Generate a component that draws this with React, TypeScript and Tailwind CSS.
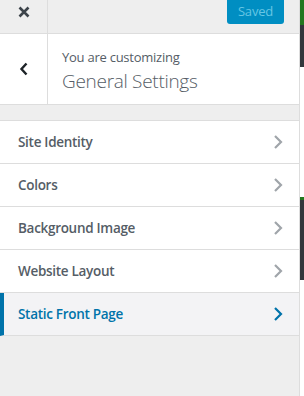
import React from 'react'

const items = ['Site Identity', 'Colors', 'Background Image', 'Website Layout', 'Static Front Page']

function Chevron({ className }: { className: string }) {
  return (
    <svg width="10" height="16" viewBox="0 0 10 16" className={className}>
      <path d="M2 2 L8 8 L2 14" fill="none" stroke="currentColor" strokeWidth="2.2" />
    </svg>
  )
}

export default function App() {
  return (
    <div
      className="flex h-[396px] w-[304px] overflow-hidden bg-white"
      style={{ fontFamily: '"Open Sans", "Noto Sans", sans-serif' }}
    >
      <div className="flex w-[300px] flex-col border-r border-[#dddddd] bg-[#eeeeee]">
        {/* Header */}
        <div className="flex h-[34px] border-b border-[#dddddd]">
          <button className="flex h-[33px] w-[48px] items-center justify-center border-r border-[#dddddd] pb-[9px]">
            <svg width="12" height="12" viewBox="0 0 12 12">
              <path d="M1.5 1.5 L10.5 10.5 M10.5 1.5 L1.5 10.5" stroke="#3c434a" strokeWidth="2.6" />
            </svg>
          </button>
          <div className="flex flex-1 justify-end pr-[15px]">
            <div className="flex h-[24px] w-[57px] items-center justify-center rounded-b-[3px] bg-[#008ec2] text-[13px] tracking-[-0.2px] text-[#66c6e4]">
              Saved
            </div>
          </div>
        </div>

        {/* Section title */}
        <div className="flex h-[71px] border-b border-[#dddddd] bg-white">
          <button className="flex w-[48px] items-center justify-center border-r border-[#dddddd]">
            <svg width="10" height="14" viewBox="0 0 10 14">
              <path d="M7.5 1.5 L2.5 7 L7.5 12.5" fill="none" stroke="#1d2327" strokeWidth="2.4" />
            </svg>
          </button>
          <div className="flex flex-col pl-[14px] pt-[13px] text-[#555d66]">
            <span className="text-[13px] leading-[20px] tracking-[-0.25px]">You are customizing</span>
            <span className="text-[19px] font-light leading-[28px] tracking-[-0.3px]">General Settings</span>
          </div>
        </div>

        {/* Sections */}
        <div className="mt-[15px] border-t border-[#dddddd]">
          {items.map((item, i) => {
            const active = i === items.length - 1
            return (
              <div
                key={item}
                className={
                  active
                    ? 'flex h-[43px] items-center justify-between border-b border-l-4 border-[#dddddd] border-l-[#0073aa] bg-[#f3f3f5] pl-[14px] pr-[16px] text-[#0073aa]'
                    : 'flex h-[43px] items-center justify-between border-b border-[#dddddd] bg-white pl-[18px] pr-[16px] text-[#555d66]'
                }
              >
                <span className="text-[13.5px] font-semibold tracking-[-0.3px]">{item}</span>
                <Chevron className={active ? 'text-[#0073aa]' : 'text-[#a0a5aa]'} />
              </div>
            )
          })}
        </div>
      </div>

      {/* Preview edge */}
      <div className="flex flex-1 flex-col bg-white">
        <div className="h-[25px] bg-[#23771f]" />
        <div className="h-[42px] bg-[#32373c]" />
        <div className="mt-[130px] h-[3px] bg-[#23771f]" />
        <div className="h-[80px] bg-[#32373c]" />
      </div>
    </div>
  )
}
